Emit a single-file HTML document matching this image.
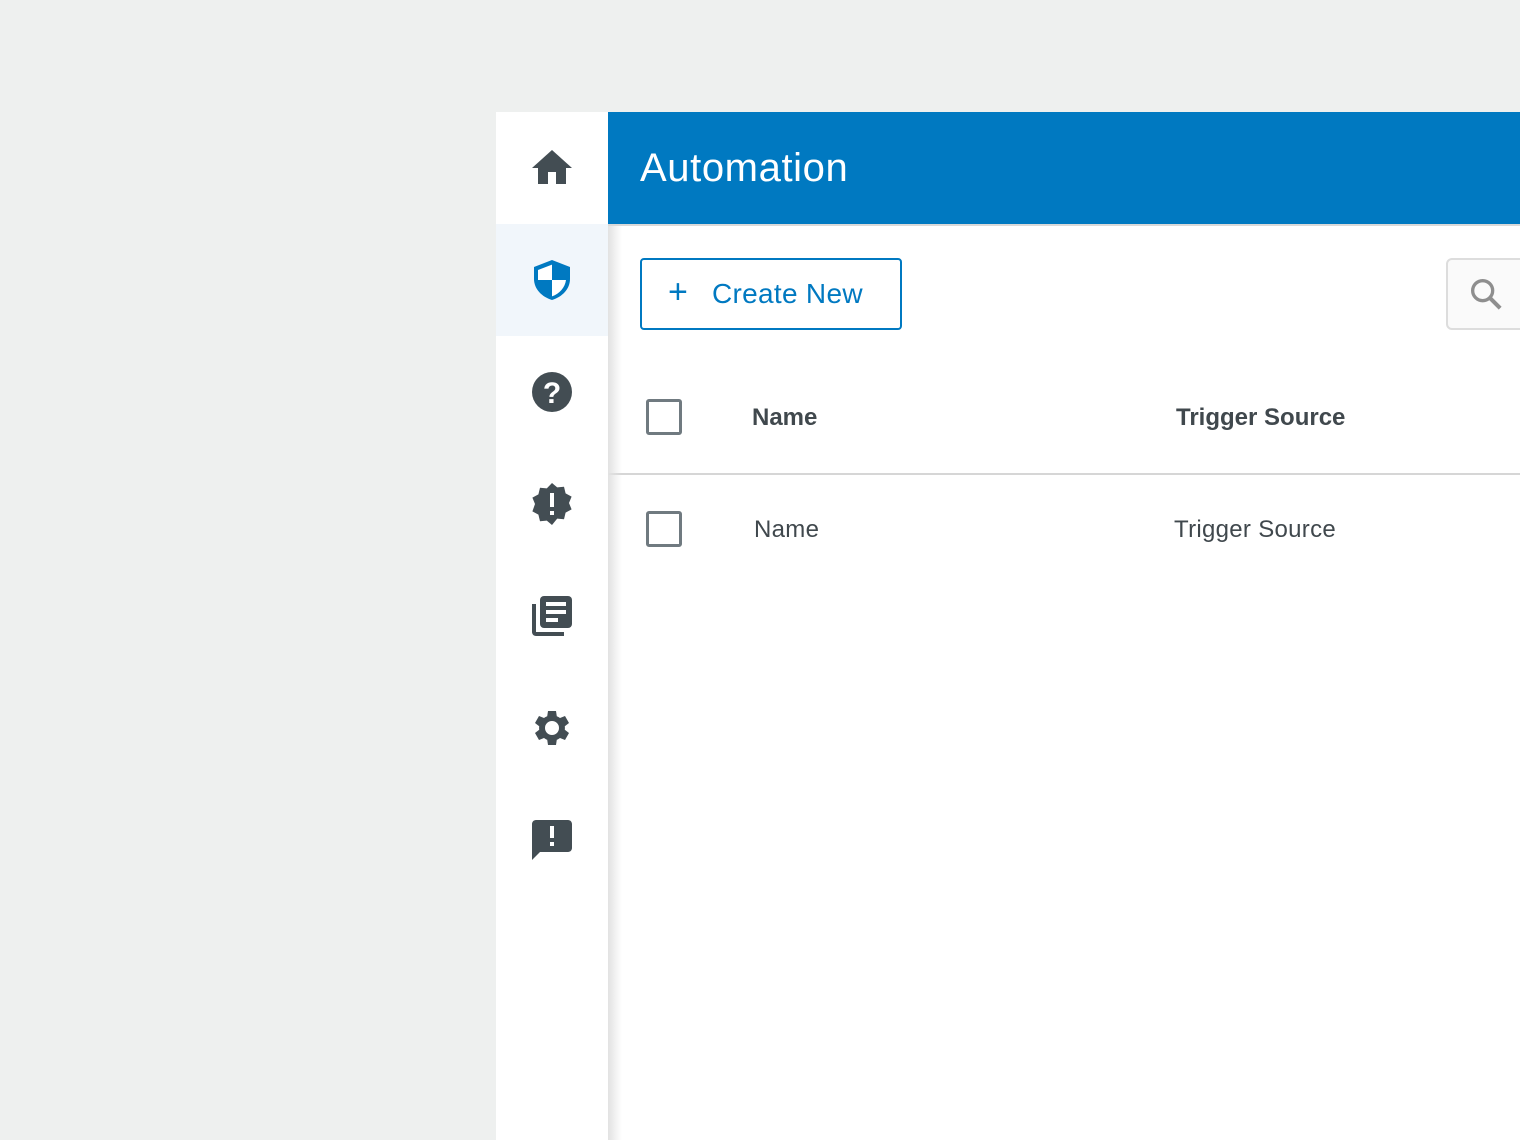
<!DOCTYPE html>
<html><head><style>
*{margin:0;padding:0;box-sizing:border-box}
body{width:1520px;height:1140px;background:#eef0ef;position:relative;overflow:hidden;font-family:"Liberation Sans",sans-serif}
.side{position:absolute;left:496px;top:112px;width:112px;height:1028px;background:#fff}
.cell{position:absolute;left:0;width:112px;height:112px;display:flex;align-items:center;justify-content:center}
.cell svg{width:48px;height:48px}
.main{position:absolute;left:608px;top:112px;width:912px;height:1028px;background:#fff}
.shadow{position:absolute;left:608px;top:226px;width:14px;height:914px;background:linear-gradient(to right,#e2e2e2,rgba(255,255,255,0))}
.hdr{position:absolute;left:0;top:0;width:912px;height:112px;background:#0079c1;color:#fff;font-size:40px;padding:34px 0 0 32px;letter-spacing:.6px}
.hl{position:absolute;left:0;top:112px;width:912px;height:2px;background:#d9d9d9}
.btn{position:absolute;left:32px;top:146px;width:262px;height:72px;border:2px solid #0079c1;border-radius:4px;color:#0079c1;font-size:28px;padding:18px 0 0 70px;letter-spacing:.3px}
.btn .p{position:absolute;left:26px;top:13px;font-size:34px;font-weight:300}
.srch{position:absolute;left:838px;top:146px;width:90px;height:72px;border:2px solid #ddd;border-radius:6px;background:#fafafa}
.cb{position:absolute;left:38px;width:36px;height:36px;border:3px solid #707a80;border-radius:3px}
.t{position:absolute;font-size:24px;color:#40484d}
.div{position:absolute;left:0;top:361px;width:912px;height:2px;background:#d6d6d6}
</style></head><body>
<div class="side">
 <div class="cell" style="top:0"><svg viewBox="0 0 24 24"><path fill="#434d53" d="M10 20v-6h4v6h5v-8h3L12 3 2 12h3v8z"/></svg></div>
 <div class="cell" style="top:112px;background:#f1f6fb"><svg viewBox="0 0 24 24"><path fill="#0079c1" d="M12 2 3 5.5v6c0 5 4 9 9 10.5 5-1.5 9-5.5 9-10.5v-6z"/><path fill="#fff" d="M12 4.3v7.7H5V7zM12 12h7c-.5 3.8-3.2 6.8-7 8.2z"/></svg></div>
 <div class="cell" style="top:224px"><svg viewBox="0 0 24 24"><circle cx="12" cy="12" r="10" fill="#434d53"/><text x="12" y="17.5" text-anchor="middle" font-size="15" font-weight="bold" fill="#fff" font-family="Liberation Sans">?</text></svg></div>
 <div class="cell" style="top:336px"><svg viewBox="0 0 24 24"><path fill="#434d53" d="M12 1.5l2.6 2.2 3.4-.3.8 3.3 3 1.6-1.3 3.2 1.3 3.2-3 1.6-.8 3.3-3.4-.3L12 22.5l-2.6-2.2-3.4.3-.8-3.3-3-1.6L3.5 12 2.2 8.8l3-1.6.8-3.3 3.4.3z"/><rect x="11" y="6.5" width="2" height="7" fill="#fff"/><rect x="11" y="15.5" width="2" height="2" fill="#fff"/></svg></div>
 <div class="cell" style="top:448px"><svg viewBox="0 0 24 24"><path fill="#434d53" d="M4 6H2v14c0 1.1.9 2 2 2h14v-2H4z"/><rect x="6" y="2" width="16" height="16" rx="2" fill="#434d53"/><path fill="#fff" d="M9 5h10v2H9zM9 9h10v2H9zM9 13h6v2H9z"/></svg></div>
 <div class="cell" style="top:560px"><svg viewBox="0 0 24 24"><path fill="#434d53" d="M19.1 12.9a7 7 0 000-1.8l2.1-1.6-2-3.5-2.5 1a7 7 0 00-1.6-.9L14.7 3.5h-4l-.4 2.6c-.6.2-1.1.5-1.6.9l-2.5-1-2 3.5 2.1 1.6a7 7 0 000 1.8l-2.1 1.6 2 3.5 2.5-1c.5.4 1 .7 1.6.9l.4 2.6h4l.4-2.6c.6-.2 1.1-.5 1.6-.9l2.5 1 2-3.5zM12.7 15.5a3.5 3.5 0 110-7 3.5 3.5 0 010 7z" transform="translate(-.7 0)"/></svg></div>
 <div class="cell" style="top:672px"><svg viewBox="0 0 24 24"><path fill="#434d53" d="M20 2H4c-1.1 0-2 .9-2 2v18l4-4h14c1.1 0 2-.9 2-2V4c0-1.1-.9-2-2-2z"/><path fill="#fff" d="M11 5h2v6h-2zM11 13h2v2h-2z"/></svg></div>
</div>
<div class="main">
 <div class="hdr">Automation</div>
 <div class="hl"></div>
 <div class="btn"><span class="p">+</span>Create New</div>
 <div class="srch"><svg width="40" height="40" viewBox="0 0 24 24" style="position:absolute;left:18px;top:14px"><circle cx="10" cy="10" r="6" fill="none" stroke="#8e8e8e" stroke-width="2"/><path d="M14.5 14.5l6 6" stroke="#8e8e8e" stroke-width="2.4"/></svg></div>
 <div class="cb" style="top:287px"></div>
 <div class="t" style="left:144px;top:292px;font-weight:bold">Name</div>
 <div class="t" style="left:568px;top:292px;font-weight:bold">Trigger Source</div>
 <div class="div"></div>
 <div class="cb" style="top:399px"></div>
 <div class="t" style="left:146px;top:404px;letter-spacing:.3px">Name</div>
 <div class="t" style="left:566px;top:404px;letter-spacing:.3px">Trigger Source</div>
</div>
<div class="shadow"></div>
</body></html>
